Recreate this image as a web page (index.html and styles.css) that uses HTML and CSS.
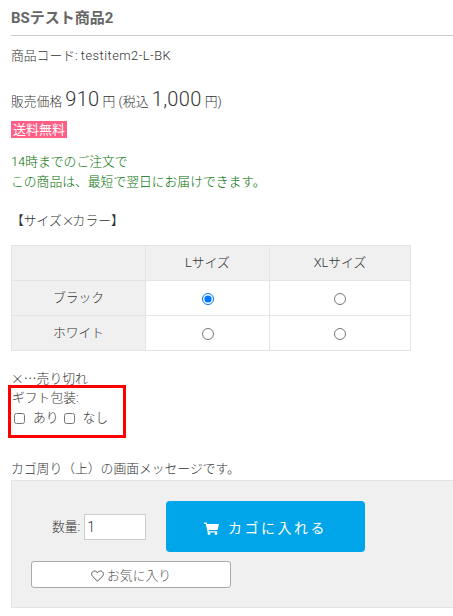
FILE: index.html
```html
<!DOCTYPE html>
<html lang="ja">
<head>
    <meta charset="UTF-8">
    <title>BSテスト商品2</title>
    <link rel="stylesheet" href="styles.css">
</head>
<body>
    <h1 class="item_name">BSテスト商品2</h1>
    <p class="item_code">商品コード: <span class="code">testitem2-L-BK</span></p>

    <p class="price">販売価格 <b>910</b> 円 <small>(税込</small> <b>1,000</b> 円<small>)</small></p>
    <p class="free"><span>送料無料</span></p>
    <p class="delivery">14時までのご注文で<br>この商品は、最短で翌日にお届けできます。</p>

    <p class="matrix_title">【サイズ<span class="wide">×</span>カラー】</p>
    <table class="matrix">
        <tr>
            <th class="col1"></th>
            <th class="col2">Lサイズ</th>
            <th class="col3">XLサイズ</th>
        </tr>
        <tr>
            <th>ブラック</th>
            <td><input type="radio" name="sku" checked></td>
            <td><input type="radio" name="sku"></td>
        </tr>
        <tr>
            <th>ホワイト</th>
            <td><input type="radio" name="sku"></td>
            <td><input type="radio" name="sku"></td>
        </tr>
    </table>

    <p class="soldout"><span class="wide">×…</span>売り切れ</p>
    <div class="gift">
        <div class="gift_label">ギフト包装:</div>
        <div class="gift_opts">
            <label><input type="checkbox">あり</label>
            <label><input type="checkbox">なし</label>
        </div>
    </div>

    <p class="cart_msg">カゴ周り（上）の画面メッセージです。</p>
    <div class="cart_box">
        <div class="cart_row">
            <label class="qty">数量:<input type="text" value="1"></label>
            <button class="add_btn">
                <svg width="15" height="13" viewBox="0 0 15 13"><path d="M0 .5h2.600l.5 1.500H15l-1.500 6H4.600l.3 1.200h8.400v1.200H3.700L1.700 1.800H0z" fill="#fff"/><circle cx="5" cy="11.600" r="1.400" fill="#fff"/><circle cx="12" cy="11.600" r="1.400" fill="#fff"/></svg>
                カゴに入れる
            </button>
        </div>
        <button class="fav_btn">
            <svg width="13" height="12" viewBox="0 0 13 12"><path d="M6.500 11.200 1.400 6.100C-.2 4.400.9 1 3.500 1c1.400 0 2.400.8 3 1.900C7.100 1.800 8.100 1 9.500 1c2.600 0 3.700 3.400 2.100 5.100z" fill="none" stroke="#555"/></svg>
            お気に入り
        </button>
    </div>
</body>
</html>
```

FILE: styles.css
```css
*{margin: 0;padding: 0;box-sizing: border-box;}
html,body{overflow: hidden;}
body{height: 616px;padding-left: 11px;font-family: Roboto,"Noto Sans CJK JP",sans-serif;font-size: 12.8px;font-weight: 300;line-height: 20px;color: #333;background: #fff;}
.wide{font-family: "Noto Sans CJK JP",sans-serif;}
.item_name{height: 28px;margin-top: 8px;font-size: 15px;font-weight: bold;line-height: 20px;color: #666;border-bottom: 1px solid #ccc;}
.item_code{margin-top: 10px;}
.code{letter-spacing: .5px;}
.price{margin-top: 19px;line-height: 28px;}
.price b{font-size: 20px;font-weight: 300;letter-spacing: .3px;}
.price small{font-size: 13px;}
.free{margin-top: 4px;height: 20px;}
.free span{display: inline-block;height: 17px;padding: 0 2px;font-size: 13px;font-weight: 400;line-height: 17px;color: #fff;background: #ff5f87;}
.delivery{margin-top: 12px;color: #006f00;}
.matrix_title{margin-top: 18px;}
.matrix_title .wide{letter-spacing: -2px;}
.matrix{width: 400px;margin-top: 14px;border-collapse: collapse;table-layout: fixed;}
.matrix th,.matrix td{height: 35px;border: 1px solid #e5e5e5;text-align: center;font-weight: 300;}
.matrix th{background: #f0f0f0;}
.matrix .col1{width: 134px;}
.matrix .col2{width: 124px;}
.matrix input{display: block;width: 12px;height: 12px;margin: 1px auto 0;}
.soldout{margin-top: 17px;line-height: 20px;}
.gift{width: 118px;height: 53px;margin: -4px 0 0 -3px;padding: 0 1px;border: 3px solid #f00;}
.gift_label{line-height: 20px;}
.gift_opts{display: flex;gap: 4px;padding-left: 1px;line-height: 20px;}
.gift_opts label{display: flex;align-items: center;}
.gift_opts input{width: 11px;height: 11px;margin: 0 8px 0 1px;}
.cart_msg{margin-top: 21px;}
.cart_box{width: 442px;height: 128px;margin-top: 1px;padding: 20px 0 0 19px;background: #f0f0f0;border: 1px solid #e5e5e5;border-right: 0;}
.cart_row{display: flex;align-items: center;}
.qty{display: flex;align-items: center;width: 115px;padding-left: 21px;white-space: nowrap;}
.qty input{width: 62px;height: 26px;margin-left: 4px;padding-left: 2px;border: 1px solid #ccc;font: inherit;font-size: 14px;color: #334;background: #fff;}
.add_btn{width: 199px;height: 51px;margin-left: 20px;border: 0;border-radius: 4px;font-family: inherit;font-size: 14px;font-weight: 400;letter-spacing: 2.5px;color: #fff;background: #00a4e8;}
.add_btn svg{margin-right: 3px;vertical-align: -2px;}
.fav_btn{display: block;width: 200px;height: 27px;margin-top: 9px;border: 1px solid #aaa;border-radius: 3px;font-family: inherit;font-size: 12.8px;font-weight: 300;color: #555;background: #fff;}
.fav_btn svg{vertical-align: -2px;}
```
